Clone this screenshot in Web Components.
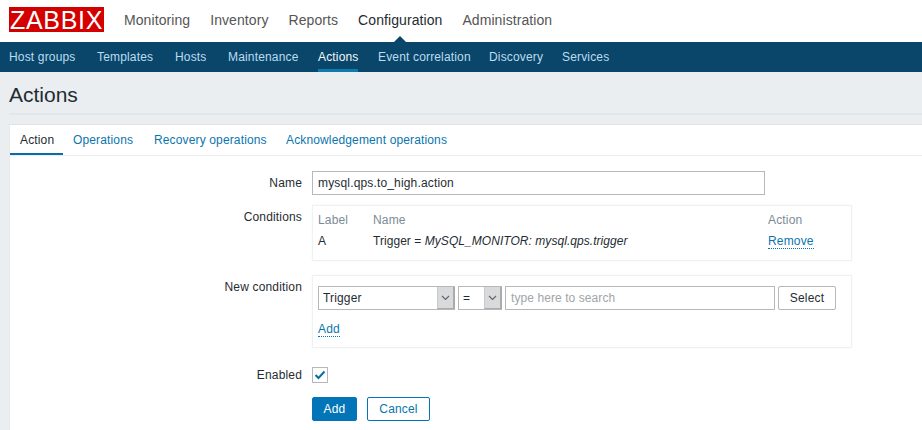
<!DOCTYPE html>
<html>
<head>
<meta charset="utf-8">
<title>Actions</title>
<style>
  html, body { margin: 0; height: 100%; overflow: hidden; background: #ebeef0; }
  body { font: 12px "Liberation Sans", Arial, sans-serif; color: #1f2c33; letter-spacing: 0.16px; }
</style>
</head>
<body>
<zbx-main-nav active="Configuration" items="Monitoring,Inventory,Reports,Configuration,Administration"></zbx-main-nav>
<zbx-sub-nav active="Actions" items="Host groups:68,Templates:58,Hosts:33,Maintenance:70,Actions:40,Event correlation:91,Discovery:53,Services:46"></zbx-sub-nav>
<zbx-page-title>Actions</zbx-page-title>
<zbx-panel>
  <zbx-tabs active="Action" items="Action:53,Operations:81,Recovery operations:132,Acknowledgement operations:183"></zbx-tabs>
  <zbx-form-row label="Name" class="name-row">
    <zbx-input value="mysql.qps.to_high.action" width="453"></zbx-input>
  </zbx-form-row>
  <zbx-form-row label="Conditions" class="cond-row">
    <zbx-conditions></zbx-conditions>
  </zbx-form-row>
  <zbx-form-row label="New condition" class="new-row">
    <zbx-new-condition></zbx-new-condition>
  </zbx-form-row>
  <zbx-form-row label="Enabled" class="enabled-row">
    <zbx-checkbox></zbx-checkbox>
  </zbx-form-row>
  <zbx-form-row class="buttons-row">
    <zbx-button kind="main">Add</zbx-button>
    <zbx-button kind="alt">Cancel</zbx-button>
  </zbx-form-row>
</zbx-panel>

<script>
//base class, saves repeating the shadow root setup in every element
class ZbxElement extends HTMLElement {
  constructor() {
    super();
    this.attachShadow({ mode: 'open' });
  }

  render(html) {
    const template = document.createElement('template');
    template.innerHTML = html;
    this.shadowRoot.appendChild(template.content.cloneNode(true));
  }

  //items are 'text' or 'text:width'
  getLinks() {
    const active = this.getAttribute('active');
    return this.getAttribute('items').split(',').map(item => {
      const [text, width] = item.split(':');
      const style = width ? `style="width:${width}px"` : '';
      return `<a class="${text === active ? 'active' : ''}" ${style}>${text}</a>`;
    }).join('');
  }
}

class MainNav extends ZbxElement {
  connectedCallback() {
    this.render(`
      <style>
        :host {
          display: flex;
          align-items: flex-start;
          height: 42px;
          background: #fff;
          box-sizing: border-box;
          padding: 7px 0 0 9px;
        }
        .logo {
          width: 95px;
          height: 25px;
          background: #d40000;
          color: #fff;
          font-size: 25px;
          line-height: 26px;
          text-align: center;
          letter-spacing: 0.7px;
          margin-right: 20px;
          flex: none;
        }
        nav {
          display: flex;
          gap: 20px;
          font-size: 14px;
          letter-spacing: 0.08px;
          line-height: 26px;
          color: #555;
        }
        a { position: relative; }
        a.active { color: #1f2c33; }
        a.active::after {
          content: '';
          position: absolute;
          left: 50%;
          bottom: -9px;
          margin-left: -6px;
          border: 6px solid transparent;
          border-top: 0;
          border-bottom-color: #0a466a;
        }
      </style>
      <div class="logo">ZABBIX</div>
      <nav>${this.getLinks()}</nav>`);
  }
}

class SubNav extends ZbxElement {
  connectedCallback() {
    this.render(`
      <style>
        :host {
          display: flex;
          gap: 20px;
          height: 30px;
          padding-left: 9px;
          background: #0a466a;
          color: #bcdcf0;
          line-height: 31px;
        }
        a { height: 30px; box-sizing: border-box; white-space: nowrap; flex: none; }
        a.active {
          color: #f2f8fc;
          border-bottom: 3px solid #0f7ab0;
        }
      </style>
      ${this.getLinks()}`);
  }
}

class PageTitle extends ZbxElement {
  connectedCallback() {
    this.render(`
      <style>
        :host {
          display: block;
          height: 52px;
          box-sizing: border-box;
          padding: 11px 0 0 9px;
          font-size: 21px;
          letter-spacing: 0;
          line-height: 24px;
          color: #1f2c33;
          position: relative;
        }
        .rule {
          position: absolute;
          left: 9px;
          right: 0;
          top: 41px;
          height: 2px;
          background: #e3e6e8;
        }
      </style>
      <slot></slot>
      <div class="rule"></div>`);
  }
}

class Panel extends ZbxElement {
  connectedCallback() {
    this.render(`
      <style>
        :host {
          display: block;
          margin-left: 9px;
          height: 306px;
          background: #fff;
          border-top: 1px solid #dfe4e7;
          border-left: 1px solid #e6e9eb;
        }
      </style>
      <slot></slot>`);
  }
}

class Tabs extends ZbxElement {
  connectedCallback() {
    this.render(`
      <style>
        :host {
          display: flex;
          height: 31px;
          box-sizing: border-box;
          border-bottom: 1px solid #ebeef0;
          color: #0a75ad;
          line-height: 31px;
          letter-spacing: 0.14px;
        }
        a {
          padding: 0 0 0 10px;
          height: 30px;
          box-sizing: border-box;
          white-space: nowrap;
          flex: none;
        }
        a.active {
          color: #1f2c33;
          border-bottom: 2px solid #0a6ea4;
        }
      </style>
      ${this.getLinks()}`);
  }
}

//label column on the left, the fields on the right
class FormRow extends ZbxElement {
  connectedCallback() {
    const label = this.getAttribute('label') || '';
    this.render(`
      <style>
        :host {
          display: flex;
          column-gap: 10px;
        }
        :host(.name-row) { margin-top: 15px; }
        :host(.cond-row) { margin-top: 10px; }
        :host(.new-row) { margin-top: 14px; }
        :host(.enabled-row) { margin-top: 19px; }
        :host(.buttons-row) { margin-top: 14px; }
        label {
          width: 292px;
          flex: none;
          text-align: right;
          line-height: 24px;
          color: #1f2c33;
        }
        :host(.enabled-row) label { line-height: 16px; }
        .field { display: flex; gap: 10px; }
      </style>
      <label>${label}</label>
      <div class="field"><slot></slot></div>`);
  }
}

class TextInput extends ZbxElement {
  connectedCallback() {
    const value = this.getAttribute('value') || '';
    const placeholder = this.getAttribute('placeholder') || '';
    this.render(`
      <style>
        :host {
          display: block;
          width: ${this.getAttribute('width')}px;
          height: 24px;
          box-sizing: border-box;
          border: 1px solid #b5b9bb;
          padding: 0 5px;
          line-height: 22px;
          color: #1f2c33;
          background: #fff;
        }
        .hint { color: #a0a5a8; letter-spacing: 0.08px; }
      </style>
      ${value || `<span class="hint">${placeholder}</span>`}`);
  }
}

class Conditions extends ZbxElement {
  connectedCallback() {
    this.render(`
      <style>
        :host {
          display: block;
          width: 540px;
          height: 56px;
          box-sizing: border-box;
          border: 1px solid #f0f1f2;
          box-shadow: 0 0 2px rgba(0, 0, 0, 0.05);
          padding: 5px 5px 0;
        }
        .grid {
          display: grid;
          grid-template-columns: 55px 395px auto;
          grid-template-rows: 22px 22px;
          line-height: 19px;
        }
        .row { letter-spacing: 0.05px; line-height: 17px; }
        .head { color: #7b8b96; }
        i { font-style: italic; }
        a {
          color: #0a75ad;
          border-bottom: 1px dotted #0a75ad;
          justify-self: start;
          height: 15px;
          line-height: 17px;
        }
      </style>
      <div class="grid">
        <span class="head">Label</span><span class="head">Name</span><span class="head">Action</span>
        <span class="row">A</span>
        <span class="row">Trigger = <i>MySQL_MONITOR: mysql.qps.trigger</i></span>
        <a>Remove</a>
      </div>`);
  }
}

class Select extends ZbxElement {
  connectedCallback() {
    this.render(`
      <style>
        :host {
          display: flex;
          justify-content: space-between;
          width: ${this.getAttribute('width')}px;
          height: 24px;
          box-sizing: border-box;
          border: 1px solid #b5b9bb;
          border-right: 0;
          padding-left: 4px;
          line-height: 22px;
          flex: none;
        }
        .arrow {
          width: 18px;
          background: #d8dadb;
          border-left: 1px solid #c8cacb;
          border-bottom: 1px solid #a9abac;
          border-right: 2px solid #a9abac;
          box-sizing: border-box;
          display: flex;
          align-items: center;
          justify-content: center;
        }
      </style>
      <span><slot></slot></span>
      <span class="arrow">
        <svg width="9" height="6" viewBox="0 0 9 6"><path d="M1 1l3.5 3.5L8 1" fill="none" stroke="#666" stroke-width="1.2"/></svg>
      </span>`);
  }
}

class NewCondition extends ZbxElement {
  connectedCallback() {
    this.render(`
      <style>
        :host {
          display: block;
          width: 540px;
          height: 73px;
          box-sizing: border-box;
          border: 1px solid #f0f1f2;
          box-shadow: 0 0 2px rgba(0, 0, 0, 0.05);
          padding: 10px 5px 0;
        }
        .line { display: flex; gap: 3px; }
        .add { margin-top: 11px; }
        a {
          display: inline-block;
          color: #0a75ad;
          border-bottom: 1px dotted #0a75ad;
          height: 15px;
          line-height: 16px;
        }
      </style>
      <div class="line">
        <zbx-select width="137">Trigger</zbx-select>
        <zbx-select width="44">=</zbx-select>
        <zbx-input width="270" placeholder="type here to search"></zbx-input>
        <zbx-button kind="plain">Select</zbx-button>
      </div>
      <div class="add"><a>Add</a></div>`);
  }
}

class Checkbox extends ZbxElement {
  connectedCallback() {
    this.render(`
      <style>
        :host {
          display: flex;
          width: 16px;
          height: 16px;
          box-sizing: border-box;
          border: 1px solid #b5b9bb;
          align-items: center;
          justify-content: center;
        }
      </style>
      <svg width="12" height="10" viewBox="0 0 12 10"><path d="M1.5 5l3 3 6-6.5" fill="none" stroke="#0a6ea4" stroke-width="2"/></svg>`);
  }
}

class Button extends ZbxElement {
  connectedCallback() {
    const kind = this.getAttribute('kind');
    const looks = {
      main: 'background:#0275b8;border-color:#0275b8;color:#fff;width:45px;',
      alt: 'background:#fff;border-color:#0275b8;color:#0a75ad;width:63px;',
      plain: 'background:#fff;border-color:#b5b9bb;color:#1f2c33;width:58px;'
    };
    this.render(`
      <style>
        :host {
          display: block;
          height: 24px;
          box-sizing: border-box;
          border: 1px solid;
          border-radius: 2px;
          line-height: 22px;
          text-align: center;
          flex: none;
          ${looks[kind]}
        }
      </style>
      <slot></slot>`);
  }
}

window.customElements.define('zbx-main-nav', MainNav);
window.customElements.define('zbx-sub-nav', SubNav);
window.customElements.define('zbx-page-title', PageTitle);
window.customElements.define('zbx-panel', Panel);
window.customElements.define('zbx-tabs', Tabs);
window.customElements.define('zbx-form-row', FormRow);
window.customElements.define('zbx-input', TextInput);
window.customElements.define('zbx-conditions', Conditions);
window.customElements.define('zbx-select', Select);
window.customElements.define('zbx-new-condition', NewCondition);
window.customElements.define('zbx-checkbox', Checkbox);
window.customElements.define('zbx-button', Button);
</script>
</body>
</html>
